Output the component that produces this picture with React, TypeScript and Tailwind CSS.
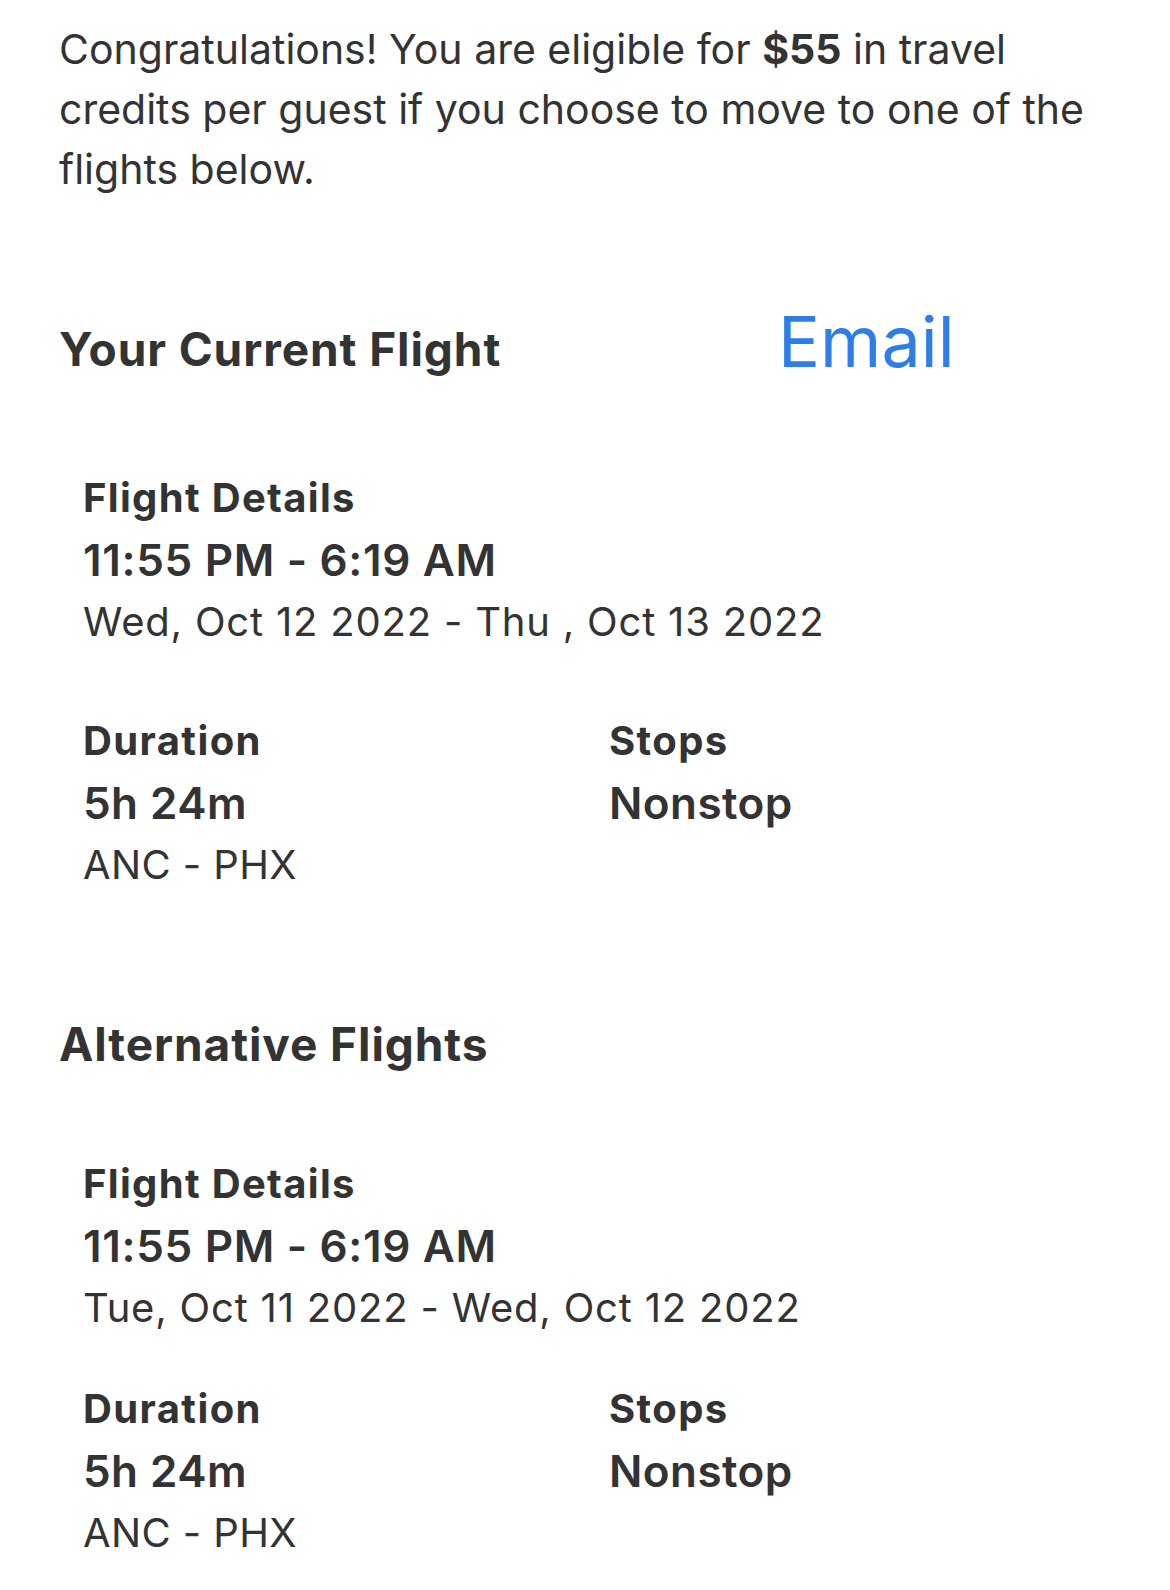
function Block({ date, gap }: { date: string; gap: string }) {
  return (
    <div className="pl-[24px]">
      <div className="text-[40px] leading-[62px] font-bold tracking-[0.033em]">Flight Details</div>
      <div className="text-[44px] leading-[62px] font-semibold tracking-[0.015em]">11:55 PM - 6:19 AM</div>
      <div className="text-[40px] leading-[62px] tracking-[0.02em]">{date}</div>
      <div className={`grid grid-cols-[526px_auto] ${gap}`}>
        <div>
          <div className="text-[40px] leading-[62px] font-bold tracking-[0.035em]">Duration</div>
          <div className="text-[44px] leading-[62px] font-semibold tracking-[0.01em]">5h 24m</div>
          <div className="text-[40px] leading-[62px] tracking-[0.01em]">ANC - PHX</div>
        </div>
        <div>
          <div className="text-[40px] leading-[62px] font-bold tracking-[0.035em]">Stops</div>
          <div className="text-[44px] leading-[62px] font-semibold tracking-[0.01em]">Nonstop</div>
        </div>
      </div>
    </div>
  );
}

export default function App() {
  const font = { fontFamily: "Inter, 'Noto Sans', sans-serif" };
  return (
    <div className="w-[1170px] h-[1590px] bg-white text-[#333333] overflow-hidden" style={font}>
      <div className="pl-[59px] pt-[19px]">
        <p className="text-[41px] leading-[60px] w-[1060px]">
          Congratulations! You are eligible for <span className="font-bold">$55</span> in travel credits per guest if you choose to move to one of the flights below.
        </p>

        <div className="mt-[120px] grid grid-cols-[719px_auto] items-center h-[60px]">
          <h2 className="text-[46px] leading-[60px] font-bold tracking-[0.02em]">Your Current Flight</h2>
          <span className="text-[70px] leading-[60px] text-[#2f7ee8] -mt-[14px]">Email</span>
        </div>

        <div className="mt-[88px]">
          <Block date="Wed, Oct 12 2022 - Thu , Oct 13 2022" gap="mt-[57px]" />
        </div>

        <h2 className="mt-[118px] text-[46px] leading-[60px] font-bold tracking-[0.02em]">Alternative Flights</h2>

        <div className="mt-[79px]">
          <Block date="Tue, Oct 11 2022 - Wed, Oct 12 2022" gap="mt-[39px]" />
        </div>
      </div>
    </div>
  );
}
